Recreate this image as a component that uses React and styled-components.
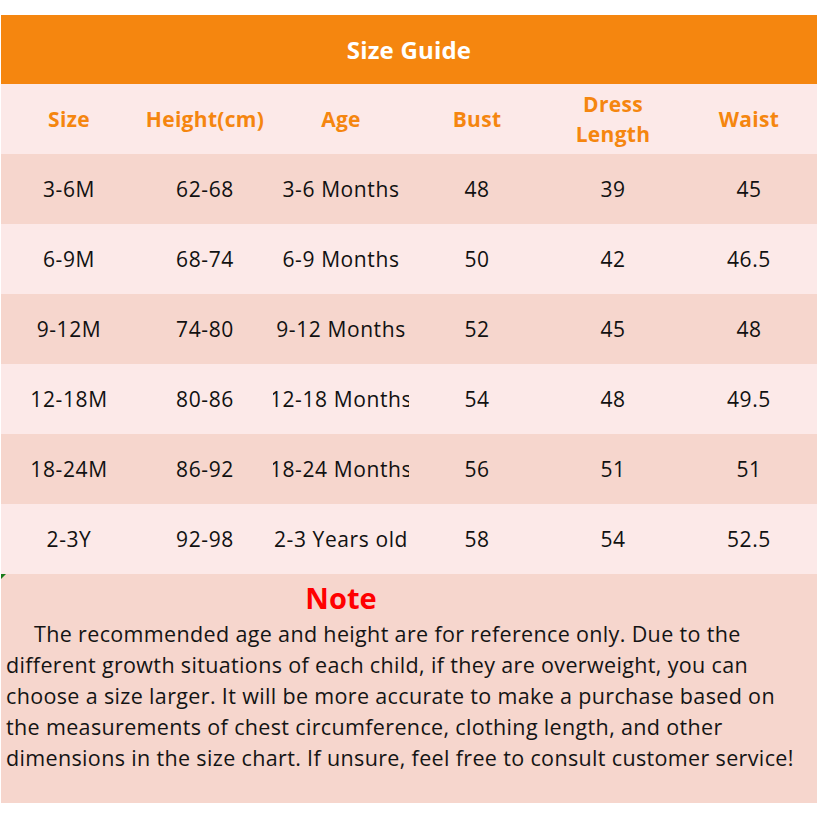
import styled, { createGlobalStyle } from "styled-components";

const GlobalStyle = createGlobalStyle`
  body {
    margin: 0;
    background: #ffffff;
    font-family: "Open Sans", "Noto Sans", sans-serif;
  }
`;

const Sheet = styled.div`
  width: 817px;
  padding: 15px 0 0 1px;
  box-sizing: border-box;
`;

const TitleBar = styled.div`
  height: 69px;
  background: #f5860f;
  color: #ffffff;
  font-size: 24px;
  letter-spacing: 0.2px;
  font-weight: 700;
  display: flex;
  align-items: center;
  justify-content: center;
`;

const Row = styled.div`
  display: grid;
  grid-template-columns: repeat(6, 136px);
  height: 70px;
  background: ${(p) => (p.$dark ? "#f6d6cd" : "#fce9e8")};
`;

const Cell = styled.div`
  display: flex;
  align-items: center;
  justify-content: center;
  text-align: center;
  overflow: hidden;
  white-space: ${(p) => (p.$head ? "normal" : "nowrap")};
  font-size: 21px;
  letter-spacing: ${(p) => (p.$head ? "0.3px" : "0.6px")};
  line-height: 30px;
  font-weight: ${(p) => (p.$head ? 700 : 400)};
  color: ${(p) => (p.$head ? "#f5860f" : "#111111")};
  span {
    flex-shrink: 0;
  }
`;

const NoteBox = styled.div`
  position: relative;
  height: 229px;
  background: #f6d6cd;
  display: grid;
  grid-template-columns: repeat(6, 136px);
  align-content: start;
`;

const Corner = styled.div`
  position: absolute;
  left: 0;
  top: 0;
  width: 0;
  height: 0;
  border-top: 5px solid #1a7a1a;
  border-right: 5px solid transparent;
`;

const NoteTitle = styled.div`
  grid-column: 1 / 6;
  text-align: center;
  color: #ff0000;
  font-size: 29px;
  font-weight: 700;
  line-height: 40px;
  padding-top: 4px;
`;

const NoteText = styled.div`
  grid-column: 1 / 7;
  padding-left: 5px;
  font-size: 21.5px;
  letter-spacing: 0.35px;
  line-height: 31px;
  color: #141414;
  span {
    display: block;
    white-space: nowrap;
  }
  span:first-child {
    text-indent: 28px;
  }
`;

const headers = ["Size", "Height(cm)", "Age", "Bust", "Dress Length", "Waist"];

const rows = [
  ["3-6M", "62-68", "3-6 Months", "48", "39", "45"],
  ["6-9M", "68-74", "6-9 Months", "50", "42", "46.5"],
  ["9-12M", "74-80", "9-12 Months", "52", "45", "48"],
  ["12-18M", "80-86", "12-18 Months", "54", "48", "49.5"],
  ["18-24M", "86-92", "18-24 Months", "56", "51", "51"],
  ["2-3Y", "92-98", "2-3 Years old", "58", "54", "52.5"],
];

const noteLines = [
  "The recommended age and height are for reference only. Due to the",
  "different growth situations of each child, if they are overweight, you can",
  "choose a size larger. It will be more accurate to make a purchase based on",
  "the measurements of chest circumference, clothing length, and other",
  "dimensions in the size chart. If unsure, feel free to consult customer service!",
];

export default function App() {
  return (
    <>
      <GlobalStyle />
      <Sheet>
        <TitleBar>Size Guide</TitleBar>
        <Row>
          {headers.map((h) => (
            <Cell $head key={h}>
              {h === "Dress Length" ? (
                <span>
                  Dress
                  <br />
                  Length
                </span>
              ) : (
                <span>{h}</span>
              )}
            </Cell>
          ))}
        </Row>
        {rows.map((r, i) => (
          <Row $dark={i % 2 === 0} key={r[0]}>
            {r.map((v, j) => (
              <Cell key={j}>
                <span>{v}</span>
              </Cell>
            ))}
          </Row>
        ))}
        <NoteBox>
          <Corner />
          <NoteTitle>Note</NoteTitle>
          <NoteText>
            {noteLines.map((l) => (
              <span key={l}>{l}</span>
            ))}
          </NoteText>
        </NoteBox>
      </Sheet>
    </>
  );
}
